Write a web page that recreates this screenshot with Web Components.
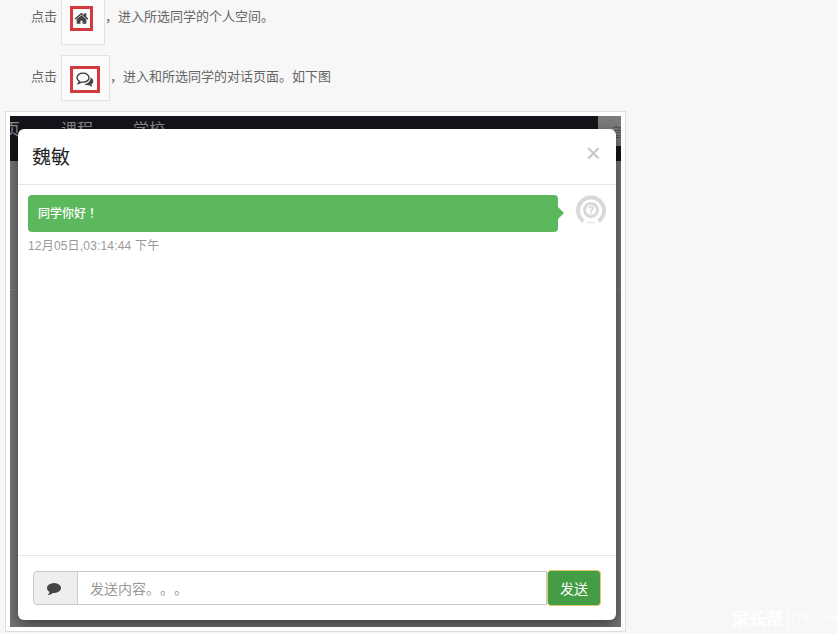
<!DOCTYPE html>
<html lang="zh">
<head>
<meta charset="utf-8">
<title>对话</title>
<style>
  html, body { margin: 0; height: 100%; overflow: hidden; background: #f7f7f7; }
  body { font-family: "Liberation Sans", "Noto Sans CJK SC", sans-serif; color: #333; text-spacing-trim: space-all; }
</style>
</head>
<body>
<help-page>
  <guide-step style="--box-width:44px;--text-top:8px;--mark-width:23px;--mark-top:7px;--mark-height:25px;margin-top:-1px">
    <svg slot="icon" width="15" height="15" viewBox="0 0 1792 1792" fill="#444"><path d="M1472 992v480q0 26-19 45t-45 19h-384v-384h-256v384h-384q-26 0-45-19t-19-45v-480q0-1 .5-3t.5-3l575-474 575 474q1 2 1 6zm223-69l-62 74q-8 9-21 11h-3q-13 0-21-7l-692-577-692 577q-12 8-24 7-13-2-21-11l-62-74q-8-10-7-23.500t11-21.500l719-599q32-26 76-26t76 26l244 204v-195q0-14 9-23t23-9h192q14 0 23 9t9 23v408l219 182q10 8 11 21.500t-7 23.500z"/></svg>
    ，进入所选同学的个人空间。
  </guide-step>
  <guide-step style="--box-width:49px;--text-top:12px;--mark-width:30px;--mark-top:11px;--mark-height:27px;margin-top:10px">
    <svg slot="icon" width="18" height="16" viewBox="0 0 18 16" fill="none">
      <path d="M7 1.200C3.700 1.200 1 3.200 1 5.700 1 7.200 2 8.500 3.400 9.300 3.200 10.200 2.800 10.900 2.300 11.500 3.500 11.300 4.500 10.800 5.300 10.100 5.800 10.200 6.400 10.200 7 10.200 10.300 10.200 13 8.200 13 5.700S10.300 1.200 7 1.200Z" stroke="#333" stroke-width="1.300"/>
      <path d="M14.500 5.500C16.200 6.400 17.300 7.700 17.300 9.200 17.300 10.500 16.500 11.700 15.300 12.500 15.500 13.300 15.900 14 16.400 14.600 15.100 14.400 14 13.900 13.100 13.200 11.300 13.400 9.500 13 8 12 11.500 12 14.800 9.500 14.500 5.500Z" fill="#444"/>
    </svg>
    ，进入和所选同学的对话页面。如下图
  </guide-step>
  <shot-frame>
    <chat-dialog title-text="魏敏">
      <chat-bubble time="12月05日,03:14:44 下午">同学你好！</chat-bubble>
    </chat-dialog>
  </shot-frame>
</help-page>
<site-mark></site-mark>

<script>
class HelpPage extends HTMLElement {
  constructor() {
    super();
    this.attachShadow({ mode: 'open' });
    this.shadowRoot.innerHTML = `
      <style>
        :host { display: flex; flex-direction: column; width: 837px; height: 634px; overflow: hidden; }
      </style>
      <slot></slot>`;
  }
}

class GuideStep extends HTMLElement {
  constructor() {
    super();
    this.attachShadow({ mode: 'open' });
    this.shadowRoot.innerHTML = `
      <style>
        :host {
          display: flex; align-items: flex-start; height: 46px; flex: none;
          padding-left: 31px; font-size: 13px; line-height: 18px; color: #666;
          font-family: "Noto Sans CJK SC", sans-serif;
        }
        .label, .text { margin-top: var(--text-top); white-space: nowrap; }
        .box {
          box-sizing: border-box; width: var(--box-width); height: 46px; margin-left: 4px;
          border: 1px solid #e2e2e2; background: #fbfbfb; padding-left: 8px;
          display: flex; align-items: flex-start;
        }
        .mark {
          box-sizing: border-box; width: var(--mark-width); height: var(--mark-height);
          margin-top: calc(var(--mark-top) - 1px); border: 3px solid #d33a3f;
          display: flex; align-items: center; justify-content: center;
        }
      </style>
      <span class="label">点击</span>
      <div class="box"><div class="mark"><slot name="icon"></slot></div></div>
      <span class="text"><slot></slot></span>`;
  }
}

class ShotFrame extends HTMLElement {
  constructor() {
    super();
    this.attachShadow({ mode: 'open' });
    this.shadowRoot.innerHTML = `
      <style>
        :host {
          display: block; box-sizing: border-box; flex: none; width: 621px; height: 521px;
          margin: 10px 0 0 5px; padding: 4px; border: 1px solid #ddd; background: #fff;
        }
        .shot { position: relative; height: 100%; overflow: hidden; background: #777; }
        .nav {
          height: 45px; background: #14141a; color: #8b8b8b; position: relative; overflow: hidden;
          font: 16px/24px "Noto Sans CJK SC", sans-serif;
        }
        .nav span { position: absolute; top: 0; }
        .nav .side {
          right: 0; top: 0; width: 23px; height: 30px; background: #7b7b7b; color: #555;
          font-size: 14px; line-height: 24px; padding: 3px 0 0 14px; box-sizing: border-box; overflow: hidden;
        }
        .rule { position: absolute; left: 0; right: 0; top: 173px; height: 1px; background: #858585; }
        .modal { position: absolute; left: 8px; top: 13px; }
      </style>
      <div class="shot">
        <div class="nav">
          <span style="left:-6px">页</span>
          <span style="left:51px">课程</span>
          <span style="left:123px">学校</span>
          <span class="side">首</span>
        </div>
        <div class="rule"></div>
        <div class="modal"><slot></slot></div>
      </div>`;
  }
}

class ChatDialog extends HTMLElement {
  constructor() {
    super();
    this.attachShadow({ mode: 'open' });
    this.shadowRoot.innerHTML = `
      <style>
        :host {
          display: flex; flex-direction: column; box-sizing: border-box; width: 598px; height: 491px;
          background: #fff; border-radius: 6px; box-shadow: 0 5px 15px rgba(0,0,0,.5);
        }
        header {
          flex: none; box-sizing: border-box; height: 56px; padding: 0 17px 2px 14px;
          border-bottom: 1px solid #e5e5e5; display: flex; align-items: center; justify-content: space-between;
        }
        h4 { margin: 0; font: 400 19px/26px "Noto Sans CJK SC", sans-serif; color: #222; }
        .close { font: 400 26px/21px "Liberation Sans", sans-serif; color: #c4c4c4; margin: -5px -2px 0 0; }
        main { flex: 1; padding: 10px 10px 0; min-height: 0; }
        footer { flex: none; box-sizing: border-box; height: 65px; padding: 15px; border-top: 1px solid #e5e5e5; }
      </style>
      <header>
        <h4>${this.getAttribute('title-text')}</h4>
        <span class="close">×</span>
      </header>
      <main><slot></slot></main>
      <footer><send-bar></send-bar></footer>`;
  }
}

class ChatBubble extends HTMLElement {
  constructor() {
    super();
    this.attachShadow({ mode: 'open' });
    this.shadowRoot.innerHTML = `
      <style>
        :host { display: block; }
        .row { display: flex; align-items: flex-start; }
        .msg {
          position: relative; box-sizing: border-box; width: 530px; height: 37px; padding: 0 10px;
          background: #5cb85c; border-radius: 4px; color: #fff;
          font: 500 12px/35px "Noto Sans CJK TC", "Noto Sans CJK SC", sans-serif;
        }
        .msg::after {
          content: ""; position: absolute; right: -6px; top: 12px;
          border-left: 6px solid #5cb85c; border-top: 6px solid transparent; border-bottom: 6px solid transparent;
        }
        .avatar { margin-left: 18px; width: 30px; height: 30px; flex: none; }
        time {
          display: block; margin-top: 6px; color: #999; font-size: 12px; line-height: 17px; letter-spacing: .18px;
          font-family: "Liberation Sans", "Noto Sans CJK SC", sans-serif;
        }
      </style>
      <div class="row">
        <div class="msg" lang="zh-Hant"><slot></slot></div>
        <svg class="avatar" viewBox="0 0 30 30" fill="none">
          <path d="M7.500 26.200A13 13 0 1 1 22.500 26.200" stroke="#d9d9d9" stroke-width="4"/>
          <circle cx="15" cy="15" r="6.500" stroke="#d9d9d9" stroke-width="3"/>
          <text x="15" y="18.500" text-anchor="middle" font-family="Liberation Sans" font-weight="700" font-size="10" fill="#cfcfcf">?</text>
          <path d="M11 27.500h8" stroke="#e6e6e6" stroke-width="1.500"/>
        </svg>
      </div>
      <time>${this.getAttribute('time')}</time>`;
  }
}

class SendBar extends HTMLElement {
  constructor() {
    super();
    this.attachShadow({ mode: 'open' });
    this.shadowRoot.innerHTML = `
      <style>
        :host { display: flex; height: 34px; align-items: center; font: 14px/20px "Noto Sans CJK SC", sans-serif; }
        .addon {
          box-sizing: border-box; width: 45px; height: 34px; flex: none; background: #eee;
          border: 1px solid #ccc; border-radius: 4px 0 0 4px;
          display: flex; align-items: center; justify-content: center;
        }
        .addon svg { margin-right: 4px; }
        .field {
          box-sizing: border-box; flex: 1; height: 34px; padding: 0 12px; margin-left: -1px;
          border: 1px solid #ccc; color: #999; line-height: 32px; background: #fff;
        }
        button {
          box-sizing: border-box; width: 54px; height: 36px; flex: none;
          background: #449d44; border: 1px solid #e3c765; border-radius: 4px; color: #fff; padding: 0;
          font: inherit;
        }
      </style>
      <span class="addon">
        <svg width="14" height="14" viewBox="0 0 1792 1792" fill="#444"><path d="M1792 896q0 174-120 321.500t-326 233-450 85.500q-70 0-145-8-198 175-460 242-49 14-114 22-17 2-30.500-9t-17.500-29v-1q-3-4-.5-12t2-10 4.500-9.500l6-9 7-8.500 8-9q7-8 31-34.500t34.500-38 31-39.500 32.500-51 27-59 26-76q-157-89-247.500-220t-90.500-281q0-130 71-248.500t191-204.500 286-136.500 348-50.500q244 0 450 85.500t326 233 120 321.500z"/></svg>
      </span>
      <div class="field">发送内容。。。</div>
      <button>发送</button>`;
  }
}

class SiteMark extends HTMLElement {
  constructor() {
    super();
    this.attachShadow({ mode: 'open' });
    this.shadowRoot.innerHTML = `
      <style>
        :host {
          position: absolute; left: 732px; top: 608px; color: #fff; white-space: nowrap;
          display: flex; align-items: center; height: 20px;
        }
        b { font: 700 17px/20px "Noto Sans CJK SC", sans-serif; }
        i { font: 400 10px/20px "Liberation Sans", sans-serif; letter-spacing: 1.700px; margin-left: 4px; padding-left: 4px; border-left: 1px solid #fff; }
      </style>
      <b>家长帮</b><i>jzb.com</i>`;
  }
}

customElements.define('help-page', HelpPage);
customElements.define('guide-step', GuideStep);
customElements.define('shot-frame', ShotFrame);
customElements.define('chat-dialog', ChatDialog);
customElements.define('chat-bubble', ChatBubble);
customElements.define('send-bar', SendBar);
customElements.define('site-mark', SiteMark);
</script>
</body>
</html>
